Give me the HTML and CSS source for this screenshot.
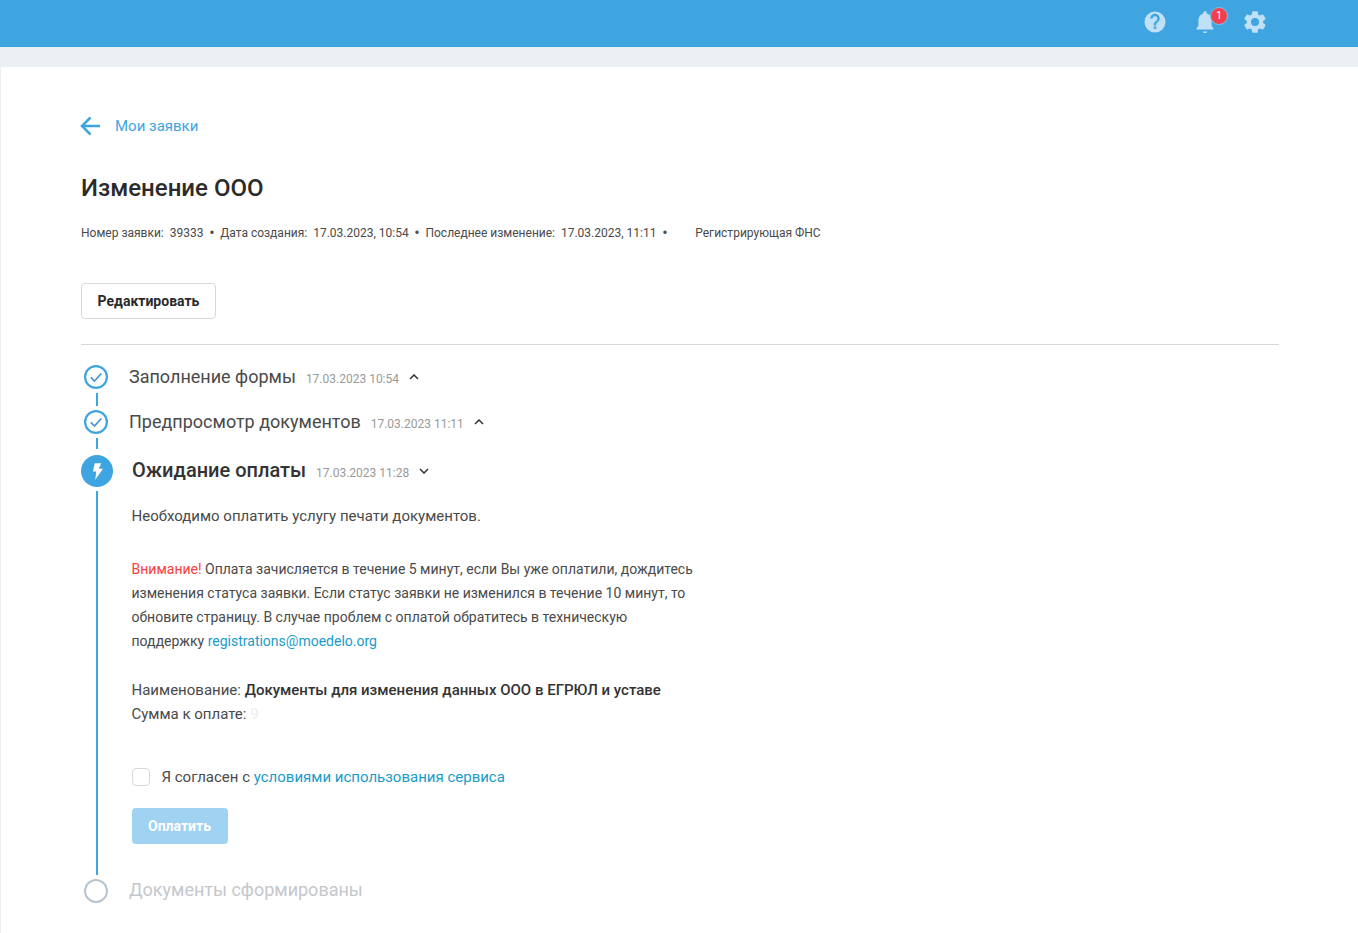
FILE: index.html
```html
<!DOCTYPE html>
<html lang="ru">
<head>
  <meta charset="UTF-8" />
  <meta name="viewport" content="width=device-width, initial-scale=1.0" />
  <title>Изменение ООО</title>
  <link rel="stylesheet" href="styles.css">
</head>
<body>
  <header class="topbar">
    <svg class="top-icon" viewBox="0 0 24 24"><path d="M12 1.500a10.500 10.500 0 1 0 0 21 10.500 10.500 0 0 0 0-21zm1.200 17.400h-2.500v-2.500h2.500v2.500zm2.500-7.700-1.100 1.100c-.9.900-1.400 1.600-1.400 3.200h-2.500v-.6c0-1.200.500-2.200 1.400-3.100l1.500-1.600c.5-.4.700-1 .7-1.600a2.300 2.300 0 0 0-4.600 0H7.200a4.800 4.800 0 0 1 9.600 0c0 1.100-.4 2-1.100 2.600z"/></svg>
    <div class="bell">
      <svg class="top-icon" viewBox="0 0 24 24"><path d="M12 23c1.200 0 2.200-.7 2.200-1.600H9.800c0 .9 1 1.600 2.200 1.600zM20.500 18.200 18.600 16v-5.800c0-3.300-2-6-5-6.700v-.9a1.600 1.600 0 0 0-3.200 0v.9c-3 .7-5 3.400-5 6.700V16l-1.900 2.200v1.400h17z"/></svg>
      <span class="badge">1</span>
    </div>
    <svg class="top-icon" viewBox="-0.700 0 24 24"><path d="M19.400 13c.1-.3.100-.7.100-1s0-.7-.1-1l2.300-1.800c.2-.2.300-.4.100-.7l-2.200-3.800c-.1-.2-.4-.3-.7-.2l-2.700 1.100c-.6-.4-1.200-.8-1.800-1l-.4-2.900c0-.3-.3-.5-.5-.5H9.100c-.3 0-.5.200-.6.500l-.4 2.900c-.6.200-1.200.600-1.800 1L3.600 4.500c-.3-.1-.5 0-.7.200L.7 8.500c-.1.300-.1.500.1.700L3.100 11c0 .3-.1.700-.1 1s0 .7.100 1L.8 14.800c-.2.200-.3.400-.1.700l2.200 3.800c.2.200.4.300.7.200l2.700-1.100c.6.400 1.200.8 1.800 1l.4 2.900c.1.300.3.500.6.500h4.400c.2 0 .5-.2.500-.5l.4-2.900c.6-.2 1.200-.6 1.800-1l2.700 1.100c.3.100.6 0 .7-.2l2.200-3.800c.2-.3.100-.5-.1-.7L19.400 13zM11.300 16a4 4 0 1 1 0-8 4 4 0 0 1 0 8z"/></svg>
  </header>

  <main class="card">
    <a class="back" href="#">
      <svg viewBox="0 0 20 20" width="20" height="20"><path d="M20 10H2M10.500 1.500 2 10l8.500 8.500" fill="none" stroke="#3ea5e1" stroke-width="2.500"/></svg>
      <span>Мои заявки</span>
    </a>

    <h1>Изменение ООО</h1>

    <div class="meta">
      <span>Номер заявки:&nbsp; 39333</span><i>•</i>
      <span>Дата создания:&nbsp; 17.03.2023, 10:54</span><i>•</i>
      <span>Последнее изменение:&nbsp; 17.03.2023, 11:11</span><i>•</i>
      <span class="fns">Регистрирующая ФНС</span>
    </div>

    <button class="btn-edit">Редактировать</button>

    <div class="timeline">
      <div class="step done">
        <span class="mark">
          <svg viewBox="0 0 24 24" width="24" height="24"><circle cx="12" cy="12" r="10.900" fill="none" stroke="#3ea5e1" stroke-width="2.200"/><path d="M6.800 12.300l3.700 3.700L17.300 8.500" fill="none" stroke="#4a93cc" stroke-width="1.700"/></svg>
        </span>
        <span class="step-title">Заполнение формы</span>
        <span class="step-date">17.03.2023 10:54</span>
        <svg class="chev" viewBox="0 0 10 6" width="10" height="6"><path d="M1 5l4-4 4 4" fill="none" stroke="#333" stroke-width="1.500"/></svg>
      </div>
      <div class="conn"></div>
      <div class="step done">
        <span class="mark">
          <svg viewBox="0 0 24 24" width="24" height="24"><circle cx="12" cy="12" r="10.900" fill="none" stroke="#3ea5e1" stroke-width="2.200"/><path d="M6.800 12.300l3.700 3.700L17.300 8.500" fill="none" stroke="#4a93cc" stroke-width="1.700"/></svg>
        </span>
        <span class="step-title">Предпросмотр документов</span>
        <span class="step-date">17.03.2023 11:11</span>
        <svg class="chev" viewBox="0 0 10 6" width="10" height="6"><path d="M1 5l4-4 4 4" fill="none" stroke="#333" stroke-width="1.500"/></svg>
      </div>
      <div class="conn conn-last"></div>

      <div class="step active">
        <span class="mark">
          <svg viewBox="0 0 12 18" width="11" height="17"><path d="M3 0h7L7.500 6H12L3.500 18l1.200-9H1z" fill="#fff"/></svg>
        </span>
        <span class="step-title">Ожидание оплаты</span>
        <span class="step-date">17.03.2023 11:28</span>
        <svg class="chev" viewBox="0 0 10 6" width="10" height="6"><path d="M1 1l4 4 4-4" fill="none" stroke="#333" stroke-width="1.500"/></svg>
      </div>

      <div class="step-body">
        <p class="lead">Необходимо оплатить услугу печати документов.</p>
        <p class="notice"><span class="warn">Внимание!</span> Оплата зачисляется в течение 5 минут, если Вы уже оплатили, дождитесь изменения статуса заявки. Если статус заявки не изменился в течение 10 минут, то обновите страницу. В случае проблем с оплатой обратитесь в техническую поддержку <a href="#">registrations@moedelo.org</a></p>
        <p class="summary">Наименование: <b>Документы для изменения данных ООО в ЕГРЮЛ и уставе</b><br>Сумма к оплате: <span class="blur">9</span></p>
        <label class="agree"><span class="check"></span><span>Я согласен с <a href="#">условиями использования сервиса</a></span></label>
        <button class="btn-pay">Оплатить</button>
      </div>

      <div class="step todo">
        <span class="mark"><span class="ring"></span></span>
        <span class="step-title">Документы сформированы</span>
      </div>
    </div>
  </main>
</body>
</html>
```

FILE: styles.css
```css
* {
  box-sizing: border-box;
}
body {
  margin: 0;
  height: 933px;
  overflow: hidden;
  background: #ebf0f3;
  font-family: Roboto, sans-serif;
  color: #333;
}
a {
  text-decoration: none;
  color: #1a9bc9;
}

/* top bar */
.topbar {
  height: 47px;
  background: #3ea5e1;
  display: flex;
  justify-content: flex-end;
  align-items: flex-start;
  gap: 26px;
  padding: 10px 91px 0 0;
}
.top-icon {
  display: block;
  width: 24px;
  height: 24px;
  fill: #c0e0f5;
}
.bell {
  position: relative;
}
.badge {
  position: absolute;
  top: -3px;
  left: 17px;
  width: 18px;
  height: 18px;
  border-radius: 50%;
  background: #f0404f;
  border: 1px solid #7fc0ea;
  color: #fff;
  font-size: 10px;
  line-height: 16px;
  text-align: center;
}

/* card */
.card {
  margin: 20px 0 0 1px;
  height: 866px;
  background: #fff;
  padding: 47px 79px 0 79px;
}
.back {
  display: flex;
  align-items: center;
  gap: 15px;
  height: 24px;
  color: #3ea5e1;
  font-size: 15px;
}
h1 {
  margin: 34px 0 0 1px;
  font-size: 24px;
  line-height: 32px;
  font-weight: 500;
  color: #2b2b2b;
}
.meta {
  margin: 21px 0 0 1px;
  font-size: 12px;
  line-height: 16px;
  color: #4a4a4a;
  display: flex;
  align-items: center;
}
.meta i {
  font-style: normal;
  font-size: 16px;
  width: 16.800px;
  text-align: center;
}
.meta .fns {
  margin-left: 22px;
}
.btn-edit {
  display: block;
  margin: 42px 0 0 1px;
  width: 135px;
  height: 36px;
  background: #fff;
  border: 1px solid #d5d9dd;
  border-radius: 4px;
  font: 700 14px Roboto, sans-serif;
  color: #2b2b2b;
}

/* timeline */
.timeline {
  margin: 25px 0 0 1px;
  border-top: 1px solid #d5d9dd;
  padding-top: 16px;
}
.step {
  display: flex;
  align-items: center;
  height: 32px;
}
.mark {
  width: 30px;
  flex: none;
  display: flex;
  justify-content: center;
  margin-right: 18px;
}
.step-title {
  margin-bottom: 2px;
  font-size: 18px;
  color: #4a4a4a;
}
.step-date {
  margin: 3px 10px 0;
  font-size: 12px;
  color: #999;
}
.conn {
  width: 2px;
  height: 13px;
  margin-left: 15px;
  background: #3ea5e1;
}
.conn-last {
  height: 11px;
}
.step.active {
  margin-top: 6px;
}
.step.active .mark {
  width: 32px;
  height: 32px;
  border-radius: 50%;
  background: #3ea5e1;
  align-items: center;
  margin-right: 19px;
}
.step.active .step-title {
  font-weight: 500;
  font-size: 20px;
  color: #333;
}
.step-body {
  margin: 4px 0 0 15px;
  padding: 0 0 0 33.500px;
  width: 660px;
  height: 384px;
  border-left: 2px solid #3ea5e1;
  font-size: 14px;
  line-height: 24px;
  color: #4a4a4a;
}
.step-body p {
  margin: 0;
}
.lead {
  padding-top: 13px;
  font-size: 15px;
}
.notice {
  padding-top: 29px;
  max-width: 563px;
}
.warn {
  color: #f5403c;
}
.summary {
  padding-top: 25px;
  font-size: 15px;
}
.summary b {
  font-weight: 500;
  color: #333;
}
.blur {
  color: #eee;
}
.agree {
  display: flex;
  align-items: center;
  gap: 12px;
  margin-top: 39px;
  font-size: 15px;
}
.check {
  width: 18px;
  height: 18px;
  border: 1px solid #d5d9dd;
  border-radius: 4px;
}
.btn-pay {
  display: block;
  margin-top: 19px;
  width: 96px;
  height: 36px;
  border: none;
  border-radius: 4px;
  background: #a0d2f1;
  color: #fff;
  font: 700 14px Roboto, sans-serif;
}
.todo .step-title {
  margin-bottom: 4px;
  color: #c4c8cc;
}
.ring {
  width: 24px;
  height: 24px;
  border: 2px solid #b8c4cf;
  border-radius: 50%;
}
```
